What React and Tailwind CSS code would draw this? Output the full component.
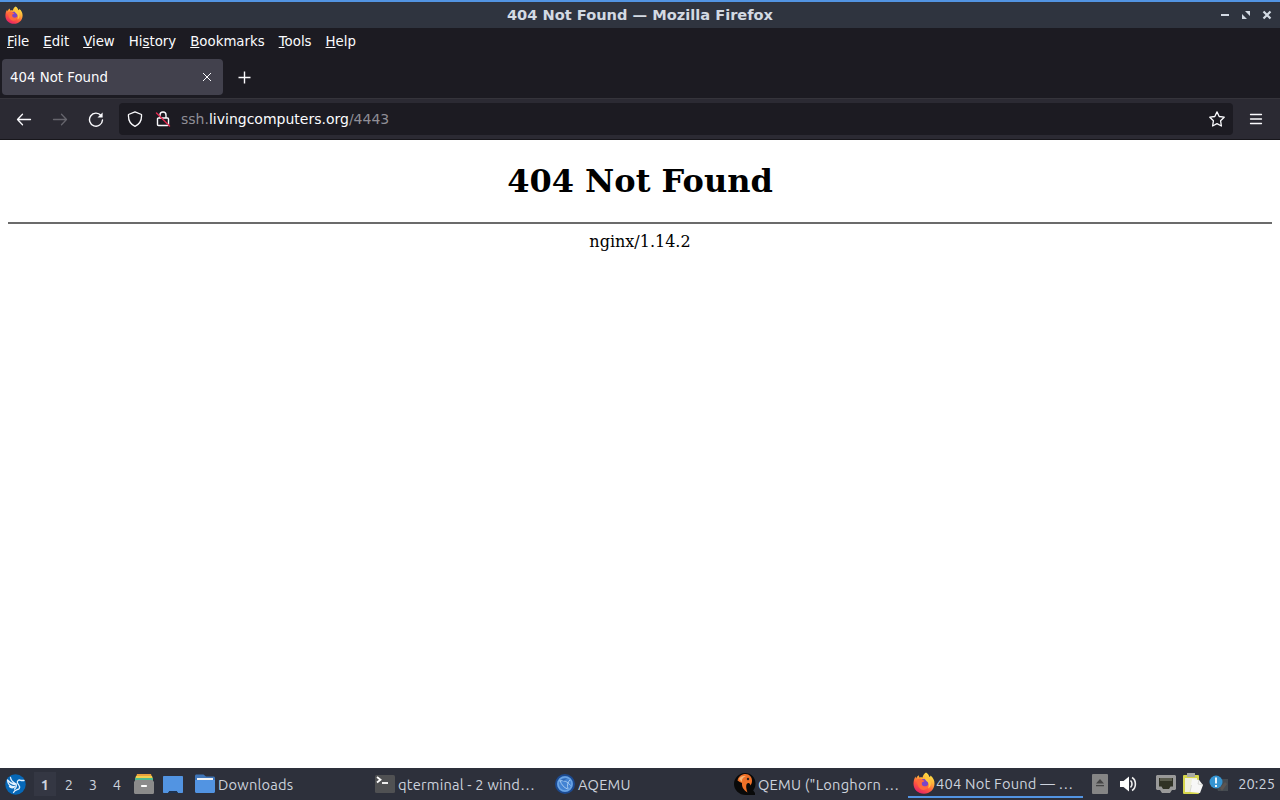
import { useState } from 'react';
import clsx from 'clsx';

const FirefoxIcon = ({ className }) => (
  <svg className={className} viewBox="0 0 22 22" aria-hidden="true">
    <defs>
      <linearGradient id="flame" x1="0.8" y1="0" x2="0.25" y2="1">
        <stop offset="0" stopColor="#fff04a" />
        <stop offset="0.35" stopColor="#ffb13a" />
        <stop offset="0.65" stopColor="#ff5a3c" />
        <stop offset="1" stopColor="#e31b6d" />
      </linearGradient>
    </defs>
    <path
      d="M13 0.5c2 1.3 3 2.8 3.4 4.6 .8-.3 1-.8 1.2-1.5 2.6 2 4 5 3.9 8.2C21.300 17.500 16.800 21.800 11 21.800 5 21.800.5 17.500.5 11.800c0-3 .8-5.600 2-7.300l.5 2C3.700 5 4.700 3.900 5.800 3.200L6.300 5.500c1-.4 2.300-.3 3.300.1C9.900 3.600 11 1.600 13 .5z"
      fill="url(#flame)"
    />
    <circle cx="11" cy="11.500" r="4.500" fill="#7a45c8" />
    <path
      d="M4 7.500c2-1.200 4-1 5.500.5l2 .8c-.3 1-1.600 1.300-2.500 1.600-.6 1.900.2 3.300 2 3.800 2 .4 3.800-.6 4.600-2.500.4 4-2 6.200-5.200 6.200C6.500 17.900 3.500 13 4 7.500z"
      fill="#ff6a3c"
    />
    <path
      d="M13 2c.3 3 4.300 4.400 4.800 9 .2 2.300-.8 4.500-2.600 5.500 1-3.500.7-6-1.800-7.500C11.500 7.500 11.500 4.500 13 2z"
      fill="#ffc83f"
    />
  </svg>
);

const LubuntuIcon = () => (
  <svg className="w-[21px] h-[21px]" viewBox="0 0 21 21" aria-hidden="true">
    <circle cx="10.500" cy="10.500" r="10.200" fill="#0668b8" />
    <g fill="none" stroke="#e4f1ff" strokeWidth="1.300" strokeLinecap="round" strokeLinejoin="round">
      <path d="M5.500 3.500c.3 2.500 2 4.500 5.500 6.500M2.500 6c.3 4.500 2.700 6.800 6.500 6.500M2.500 6c2 2.500 4.500 4 7.500 4.500M4.500 12.500c1.500 1.800 4 1.500 5.500 0" />
      <path d="M19 6.500h-3c-2.300-1.300-4.300.5-3.500 2.500 1 2 3 3 1.800 5.300-1 1.700-4.300 1.200-5.800 4.200" />
      <path d="M11 10c.8 2 .3 3.500-1.500 5" />
    </g>
  </svg>
);

const FilesIcon = () => (
  <svg className="w-5 h-5" viewBox="0 0 20 20" aria-hidden="true">
    <path d="M3 0h14l1 3H2z" fill="#e9a03b" />
    <path d="M2 2h16l1 3H1z" fill="#f2d04e" />
    <path d="M1 4h18v4H1z" fill="#51b88e" />
    <path d="M1.500 6h17L20 8v10.500c0 .8-.5 1.500-1.500 1.500h-17C.6 20 0 19.300 0 18.500V8z" fill="#8b8b8b" />
    <rect x="7" y="11" width="6" height="2" rx=".8" fill="#fff" />
  </svg>
);

const DesktopIcon = () => (
  <svg className="w-5 h-[17px]" viewBox="0 0 20 17" aria-hidden="true">
    <path d="M0 1c0-.6.400-1 1-1h18c.6 0 1 .4 1 1v15c0 .6-.4 1-1 1h-4l-1.500-2h-7L5 17H1c-.6 0-1-.4-1-1z" fill="#5294e2" />
    <path d="M6.500 15h7l1.500 2H5z" fill="#1f3350" />
  </svg>
);

const FolderIcon = () => (
  <svg className="w-[22px] h-[22px]" viewBox="0 0 22 22" aria-hidden="true">
    <path d="M1 3c0-.9.6-1.500 1.500-1.500h7L12 3.500h7.500c.9 0 1.500.6 1.500 1.500v14H1z" fill="#3f75b8" />
    <path d="M3 5h16v3H3z" fill="#f4f4f4" />
    <path d="M1 7h20v11.500c0 .9-.6 1.500-1.500 1.500h-17C1.600 20 1 19.400 1 18.500z" fill="#5294e2" />
  </svg>
);

const TerminalIcon = () => (
  <svg className="w-[22px] h-[22px]" viewBox="0 0 22 22" aria-hidden="true">
    <rect x="1" y="2" width="20" height="18" rx="1.500" fill="#505153" />
    <path d="M3 4l3.500 2.700L3 9.500" fill="none" stroke="#fff" strokeWidth="1.800" />
    <path d="M8 10h6" stroke="#fff" strokeWidth="1.800" />
  </svg>
);

const AqemuIcon = () => (
  <svg className="w-[22px] h-[22px]" viewBox="0 0 22 22" aria-hidden="true">
    <circle cx="11" cy="11" r="9" fill="#4383d3" stroke="#1c4a90" strokeWidth="2" />
    <circle cx="11" cy="11" r="7" fill="none" stroke="#6da5e4" strokeWidth="1.500" />
    <path
      d="M5.500 8c4-1 8 .5 11 4.500M6 7.500c1.500 4.500 4 7 7.500 8.500M16 7c-2.500 2-3 5.500-2 9"
      fill="none"
      stroke="#a3c8f0"
      strokeWidth="1"
    />
    <path d="M7 6.500l6-1.500-3 3z" fill="#2f68b5" />
  </svg>
);

const QemuIcon = () => (
  <svg className="w-[22px] h-[22px]" viewBox="0 0 22 22" aria-hidden="true">
    <path d="M11 0c6 0 10.500 4.500 10.500 10.500 0 3-1 5.300-2.300 7L21 20v2h-9C5 22 0 17 0 11S5 0 11 0z" fill="#090909" />
    <path d="M3.500 7.500C4.500 3.500 7.500 1 11.500 1 15.500 1 18 4 18 7.500c0 2-.5 3.500-1.500 5-.3-1.800-1.200-2.800-2.500-2.500-2.300.7-2.300 4.500-.5 9.500C9.500 17 7.500 13.500 8 10 6.500 9.500 5 8.500 3.500 7.500z" fill="#ee7028" />
    <path d="M5 6c1.500-2.800 4.500-3.700 7-2.700C9.500 3.800 7.500 6 8 9z" fill="#f3b678" />
    <circle cx="14" cy="6" r="1.200" fill="#222" />
  </svg>
);

const EjectIcon = () => (
  <svg className="w-4 h-5" viewBox="0 0 16 20" aria-hidden="true">
    <rect width="16" height="20" rx="1" fill="#858585" />
    <path d="M8 5l4 4.500H4zM4 11h8v1.300H4z" fill="#444" />
  </svg>
);

const VolumeIcon = () => (
  <svg className="w-[17px] h-4" viewBox="0 0 17 16" aria-hidden="true">
    <path d="M0 5h3.500L9 .5v15L3.500 11H0z" fill="#fff" />
    <path d="M10.500 4.500c2 1.800 2 5.200 0 7M12 1.500c4.500 2.500 4.500 10.500 0 13" fill="none" stroke="#eee" strokeWidth="1.600" />
  </svg>
);

const NetworkIcon = () => (
  <svg className="w-5 h-[18px]" viewBox="0 0 20 18" aria-hidden="true">
    <path d="M1 0h18l1 1v13l-1 1h-3l-2 3H6l-2-3H1l-1-1V1z" fill="#999" />
    <path d="M3 3h14v8.500h-2.500L13 14H7l-1.500-2.500H3z" fill="#303225" />
    <path d="M5 3v3m2-3v3m2-3v3m2-3v3m2-3v3m2-3v3" stroke="#9b9b8a" strokeWidth=".8" />
  </svg>
);

const ClipboardIcon = () => (
  <svg className="w-5 h-[22px]" viewBox="0 0 20 22" aria-hidden="true">
    <rect x="0" y="2" width="16" height="19" rx="1" fill="#d6d64c" />
    <path d="M2 5h12v14H2z" fill="#eff0dc" />
    <path d="M4 0h8v4H4z" fill="#a9aaa4" />
    <path d="M9 6l7 1 4 5-3 8-10-1z" fill="#f7f7f7" />
    <path d="M7 19l1.500-7M16 7l-1 4 5 1" fill="none" stroke="#cbcbc6" strokeWidth=".7" />
  </svg>
);

const NotifierIcon = () => (
  <svg className="w-5 h-[18px]" viewBox="0 0 20 18" aria-hidden="true">
    <path d="M5 4h14v12H9z" fill="#454b51" />
    <path d="M11 13l5-6 2 2-5 7z" fill="#5b5552" />
    <circle cx="7" cy="7" r="6.500" fill="#3594d1" />
    <path d="M7 2.500v6M7 10v2" stroke="#fff" strokeWidth="1.800" />
  </svg>
);

const menus = [
  ['', 'F', 'ile'],
  ['', 'E', 'dit'],
  ['', 'V', 'iew'],
  ['Hi', 's', 'tory'],
  ['', 'B', 'ookmarks'],
  ['', 'T', 'ools'],
  ['', 'H', 'elp'],
];

const tasks = [
  { id: 1, title: 'Downloads', icon: <FolderIcon /> },
  { id: 2, title: 'qterminal - 2 wind…', icon: <TerminalIcon /> },
  { id: 3, title: 'AQEMU', icon: <AqemuIcon /> },
  { id: 4, title: 'QEMU ("Longhorn …', icon: <QemuIcon /> },
  {
    id: 5,
    title: '404 Not Found — …',
    icon: <FirefoxIcon className="w-[22px] h-[22px]" />,
    active: true,
  },
];

const TitleBar = () => (
  <header className="h-7 shrink-0 bg-[#2f343f] border-t-2 border-[#5294e2] grid grid-cols-[1fr_auto_1fr] items-center text-[#d3dae3]">
    <FirefoxIcon className="ml-[5px] w-[18px] h-[18px]" />
    <h1 className="text-[14.6px] leading-none font-bold">404 Not Found — Mozilla Firefox</h1>
    <svg className="justify-self-end mr-2 w-[52px] h-3" viewBox="0 0 52 12" aria-hidden="true">
      <path d="M1 6h8" stroke="currentColor" strokeWidth="2" />
      <path d="M25 2h5v5zM22 5v5h5z" fill="currentColor" />
      <path d="M43.500 2.500l7 7m0-7l-7 7" stroke="currentColor" strokeWidth="2.200" />
    </svg>
  </header>
);

const NavBar = () => (
  <div className="h-[42px] shrink-0 bg-[#2b2a33] border-t border-[#35343b] border-b border-b-[#17161b] flex items-center text-[#fbfbfe]">
    <svg className="ml-4 w-4 h-4" viewBox="0 0 16 16" fill="none" stroke="currentColor" strokeWidth="1.300" strokeLinecap="round" strokeLinejoin="round">
      <path d="M14.500 8.500H1.500m5-5.200L1.500 8.500l5 5.200" />
    </svg>
    <svg className="ml-5 w-4 h-4 text-[#66656d]" viewBox="0 0 16 16" fill="none" stroke="currentColor" strokeWidth="1.300" strokeLinecap="round" strokeLinejoin="round">
      <path d="M1.500 8.500h13m-5-5.200l5 5.200-5 5.200" />
    </svg>
    <svg className="ml-5 w-4 h-4" viewBox="0 0 16 16" fill="none" stroke="currentColor" strokeWidth="1.400" strokeLinecap="round">
      <path d="M13 4.500A6.500 6.500 0 1 0 14.500 9" />
      <path d="M14.600 1.500v5H9.500z" fill="currentColor" stroke="none" />
    </svg>
    <div className="ml-[15px] h-8 w-[1114px] rounded bg-[#1c1b22] flex items-center">
      <svg className="ml-2 w-4 h-4" viewBox="0 0 16 16" fill="none" stroke="currentColor" strokeWidth="1.300" strokeLinejoin="round">
        <path d="M8 .8l6.500 2.700c.4 5.200-1.500 9.500-6.500 11.800C3 13 1.100 8.700 1.500 3.500z" />
      </svg>
      <svg className="ml-3 w-4 h-4" viewBox="0 0 16 16" fill="none" strokeWidth="1.400" strokeLinecap="round">
        <path d="M5 7V4a3 3 0 0 1 6 0v3M3.500 7h9c.6 0 1 .4 1 1v5.500c0 .6-.4 1-1 1h-9c-.6 0-1-.4-1-1V8c0-.6.4-1 1-1z" stroke="currentColor" />
        <path d="M1.500 2l13 13" stroke="#e22850" />
      </svg>
      <div className="ml-[10px] flex-1 text-sm leading-none text-[#8f8e96]">
        ssh.<span className="text-[#fbfbfe]">livingcomputers.org</span>/4443
      </div>
      <svg className="mr-2 w-4 h-4" viewBox="0 0 16 16" fill="none" stroke="currentColor" strokeWidth="1.300" strokeLinejoin="round">
        <path d="M8 .9l2.200 4.600 5 .7-3.600 3.600.8 5.200L8 12.600 3.600 15l.8-5.200L.8 6.200l5-.7z" />
      </svg>
    </div>
    <svg className="ml-[15px] w-4 h-4" viewBox="0 0 16 16" fill="none" stroke="currentColor" strokeWidth="1.300" strokeLinecap="round">
      <path d="M2.500 3.500h11m-11 4.500h11m-11 4.500h11" />
    </svg>
  </div>
);

const TaskBar = ({ desktop, setDesktop }) => (
  <footer className="h-8 shrink-0 bg-[#2d303b] flex items-center text-[#ccd2dc] font-['Ubuntu','Noto_Sans',sans-serif] text-[14.67px] leading-none">
    <div className="ml-[5px]">
      <LubuntuIcon />
    </div>
    <div className="ml-2 flex">
      {[1, 2, 3, 4].map((n) => (
        <button
          key={n}
          onClick={() => setDesktop(n)}
          className={clsx(
            'w-[22px] h-6 mr-0.5 pt-0.5 text-center',
            n === desktop && 'bg-[#343743] font-bold'
          )}
        >
          {n}
        </button>
      ))}
    </div>
    <div className="ml-1 flex items-center gap-[9px]">
      <FilesIcon />
      <DesktopIcon />
    </div>
    <div className="ml-[5px] flex h-full">
      {tasks.map((task) => (
        <div
          key={task.id}
          className={clsx(
            'flex items-center whitespace-nowrap',
            task.active
              ? 'h-[30px] w-[175px] pl-[5px] pt-0.5 border-b-2 border-[#5294e2]'
              : 'h-8 w-[180px] pl-[6px]'
          )}
        >
          {task.icon}
          <span
            className={clsx('pt-0.5 tracking-[0.21px]', task.active ? 'ml-px' : 'ml-0.5')}
          >
            {task.title}
          </span>
        </div>
      ))}
    </div>
    <div className="ml-[9px] flex flex-1 items-center">
      <EjectIcon />
      <div className="ml-3">
        <VolumeIcon />
      </div>
      <div className="ml-[19px]">
        <NetworkIcon />
      </div>
      <div className="ml-[7px]">
        <ClipboardIcon />
      </div>
      <div className="ml-[6px]">
        <NotifierIcon />
      </div>
      <time className="ml-auto mr-[5px]">20:25</time>
    </div>
  </footer>
);

const App = () => {
  const [desktop, setDesktop] = useState(1);

  return (
    <div className="h-screen w-full overflow-hidden flex flex-col bg-white font-['DejaVu_Sans',sans-serif]">
      <TitleBar />
      <nav className="h-7 shrink-0 bg-[#1c1b22] pl-[7px] pb-px flex items-center gap-[14px] text-[13.33px] leading-none text-[#fbfbfe]">
        {menus.map(([before, key, after]) => (
          <span key={after}>
            {before}
            <span className="underline underline-offset-1">{key}</span>
            {after}
          </span>
        ))}
      </nav>
      <div className="h-[42px] shrink-0 bg-[#1c1b22] flex items-center pl-0.5 text-[#fbfbfe]">
        <div className="w-[221px] h-9 rounded bg-[#42414d] flex items-center justify-between pl-2 pr-[11px]">
          <span className="pt-0.5 text-[13.33px] leading-none">404 Not Found</span>
          <svg className="w-[10px] h-[10px]" viewBox="0 0 10 10" stroke="currentColor" strokeWidth="1">
            <path d="M1 1l8 8m0-8l-8 8" />
          </svg>
        </div>
        <svg className="ml-[15px] w-[13px] h-[13px]" viewBox="0 0 13 13" stroke="currentColor" strokeWidth="1.400">
          <path d="M6.500 .5v12M.5 6.500h12" />
        </svg>
      </div>
      <NavBar />
      <main className="flex-1 px-2 text-center text-black font-['DejaVu_Serif',serif]">
        <h1 className="mt-[21px] mb-[21px] text-[32px] leading-10 font-bold">404 Not Found</h1>
        <hr className="border-t-2 border-[#6b6b6b]" />
        <p className="mt-2 text-base leading-5">nginx/1.14.2</p>
      </main>
      <TaskBar desktop={desktop} setDesktop={setDesktop} />
    </div>
  );
};

export default App;
